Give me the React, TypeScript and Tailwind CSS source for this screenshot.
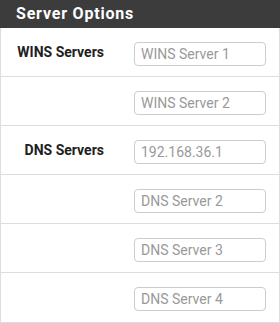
import React from "react";

const rows: { label?: string; placeholder: string; value?: string }[] = [
  { label: "WINS Servers", placeholder: "WINS Server 1" },
  { placeholder: "WINS Server 2" },
  { label: "DNS Servers", placeholder: "192.168.36.1" },
  { placeholder: "DNS Server 2" },
  { placeholder: "DNS Server 3" },
  { placeholder: "DNS Server 4" },
];

export default function App() {
  return (
    <div className="w-[280px] h-[323px] bg-white" style={{ fontFamily: "Roboto, 'Liberation Sans', sans-serif" }}>
      <div className="h-[28px] bg-[#3c3c3c] text-white font-bold text-[16px] leading-[28px] pl-[16px] tracking-[0.8px]">
        Server Options
      </div>
      <div className="border-x border-b border-[#dddddd]">
        {rows.map((r, i) => (
          <div key={i} className={"flex h-[49px] " + (i < rows.length - 1 ? "border-b border-[#dddddd]" : "")}>
            <div className="w-[103px] text-right font-bold text-[14px] leading-[18px] text-[#212121] pt-[15px]">
              {r.label ?? ""}
            </div>
            <div className="pl-[30px] pt-[14px]">
              <input
                className="w-[132px] h-[24px] border border-[#cccccc] rounded-[4px] px-[6px] text-[14px] text-[#555555] placeholder:text-[#999999] outline-none"
                placeholder={r.placeholder}
              />
            </div>
          </div>
        ))}
      </div>
    </div>
  );
}
